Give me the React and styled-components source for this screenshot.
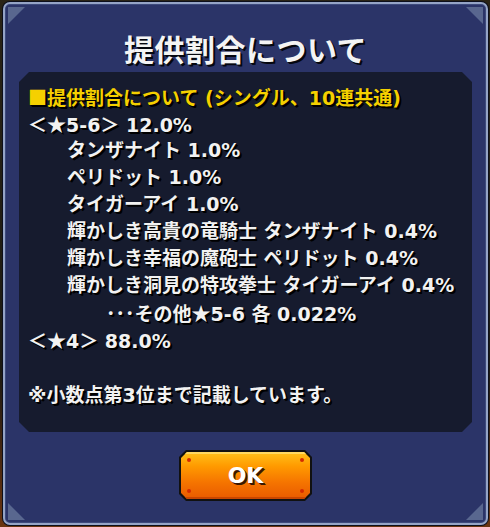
import React from 'react';
import styled, { createGlobalStyle } from 'styled-components';

const GlobalStyle = createGlobalStyle`
  html, body {
    margin: 0;
    padding: 0;
    background: #120e0a;
  }
  body {
    font-family: "Noto Sans CJK JP", "Noto Sans", sans-serif;
  }
`;

const Screen = styled.div`
  width: 490px;
  height: 527px;
  box-sizing: border-box;
  padding: 2px 2px 2px 3px;
  background: linear-gradient(180deg, #2a2416 0%, #1c1a12 70%, #6a3410 100%);
`;

const Panel = styled.div`
  position: relative;
  box-sizing: border-box;
  height: 523px;
  border: 2px solid #95a4c6;
  border-radius: 7px;
  box-shadow: 0 0 0 1px #0c0f1c, inset 0 0 0 1px #3d4a7c;
  background: #2b3468;
  display: flex;
  flex-direction: column;
  align-items: center;
`;

const Corner = styled.span`
  position: absolute;
  width: 17px;
  height: 17px;
  background: #59678f;
  ${p => (p.$v === 'top' ? 'top: 3px;' : 'bottom: 3px;')}
  ${p => (p.$h === 'left' ? 'left: 3px;' : 'right: 3px;')}
  clip-path: ${p =>
    p.$v === 'top'
      ? p.$h === 'left'
        ? 'polygon(0 0, 100% 0, 0 100%)'
        : 'polygon(0 0, 100% 0, 100% 100%)'
      : p.$h === 'left'
      ? 'polygon(0 0, 100% 100%, 0 100%)'
      : 'polygon(100% 0, 100% 100%, 0 100%)'};
`;

const Title = styled.h1`
  margin: 22px 0 0;
  height: 44px;
  font-size: 30px;
  line-height: 44px;
  font-weight: 700;
  color: #f4f4f4;
  letter-spacing: 0.5px;
  text-shadow: 2px 2px 0 #05070f, 1px 1px 0 #05070f;
`;

const InfoBox = styled.div`
  box-sizing: border-box;
  width: 453px;
  height: 360px;
  margin-top: 2px;
  padding: 11px 0 0 9px;
  background: #161b2e;
  clip-path: polygon(
    10px 0, calc(100% - 10px) 0, 100% 10px,
    100% calc(100% - 10px), calc(100% - 10px) 100%,
    10px 100%, 0 calc(100% - 10px), 0 10px
  );
`;

const Line = styled.div`
  height: 27px;
  line-height: 27px;
  font-family: "DejaVu Sans", "Noto Sans CJK JP", sans-serif;
  font-size: 19px;
  font-weight: 700;
  white-space: nowrap;
  color: ${p => (p.$accent ? '#f5d000' : '#f2f2f2')};
  padding-left: ${p => p.$indent * 39}px;
  text-shadow: 1px 1px 0 #000, 2px 2px 0 #000;
`;

const Sym = styled.span`
  font-family: "Noto Sans CJK JP", sans-serif;
`;

const Blank = styled.div`
  height: 29px;
`;

const ButtonFrame = styled.button`
  position: relative;
  margin-top: 18px;
  width: 133px;
  height: 51px;
  padding: 2px;
  border: none;
  background: #111;
  cursor: pointer;
  clip-path: polygon(
    7px 0, calc(100% - 7px) 0, 100% 7px,
    100% calc(100% - 7px), calc(100% - 7px) 100%,
    7px 100%, 0 calc(100% - 7px), 0 7px
  );
`;

const ButtonFace = styled.span`
  display: flex;
  align-items: center;
  justify-content: center;
  width: 100%;
  height: 100%;
  background: linear-gradient(180deg, #ffc21a 0%, #ff9a00 30%, #f57400 65%, #e85a00 100%);
  box-shadow: inset 0 2px 0 #ffd860, inset 0 -2px 0 #c84600;
  clip-path: polygon(
    6px 0, calc(100% - 6px) 0, 100% 6px,
    100% calc(100% - 6px), calc(100% - 6px) 100%,
    6px 100%, 0 calc(100% - 6px), 0 6px
  );
  font-family: "DejaVu Sans", "Noto Sans", sans-serif;
  font-size: 22px;
  font-weight: 700;
  color: #fff;
  text-shadow: 2px 2px 0 #3a1600, 1px 1px 0 #3a1600;
`;

const Rivet = styled.span`
  position: absolute;
  width: 4px;
  height: 4px;
  border-radius: 50%;
  background: #d42a00;
  ${p => (p.$v === 'top' ? 'top: 8px;' : 'bottom: 8px;')}
  ${p => (p.$h === 'left' ? 'left: 8px;' : 'right: 8px;')}
`;

const lines = [
  { text: '■提供割合について (シングル、10連共通)', accent: true, indent: 0 },
  { text: '＜★5-6＞ 12.0%', indent: 0 },
  { text: 'タンザナイト 1.0%', indent: 1 },
  { text: 'ペリドット 1.0%', indent: 1 },
  { text: 'タイガーアイ 1.0%', indent: 1 },
  { text: '輝かしき高貴の竜騎士 タンザナイト 0.4%', indent: 1 },
  { text: '輝かしき幸福の魔砲士 ペリドット 0.4%', indent: 1 },
  { text: '輝かしき洞見の特攻拳士 タイガーアイ 0.4%', indent: 1 },
  { text: '･･･その他★5-6 各 0.022%', indent: 2 },
  { text: '＜★4＞ 88.0%', indent: 0 },
];

// symbols such as ★ and ■ come from the CJK font so they are full width
const withSymbols = text =>
  text.split(/([★■])/).map((part, i) =>
    part === '★' || part === '■' ? <Sym key={i}>{part}</Sym> : part
  );

export default function App() {
  return (
    <>
      <GlobalStyle />
      <Screen>
        <Panel>
          <Corner $v="top" $h="left" />
          <Corner $v="top" $h="right" />
          <Corner $v="bottom" $h="left" />
          <Corner $v="bottom" $h="right" />
          <Title>提供割合について</Title>
          <InfoBox>
            {lines.map((l, i) => (
              <Line key={i} $accent={l.accent} $indent={l.indent}>
                {withSymbols(l.text)}
              </Line>
            ))}
            <Blank />
            <Line $indent={0}>※小数点第3位まで記載しています。</Line>
          </InfoBox>
          <ButtonFrame>
            <ButtonFace>OK</ButtonFace>
            <Rivet $v="top" $h="left" />
            <Rivet $v="top" $h="right" />
            <Rivet $v="bottom" $h="left" />
            <Rivet $v="bottom" $h="right" />
          </ButtonFrame>
        </Panel>
      </Screen>
    </>
  );
}
